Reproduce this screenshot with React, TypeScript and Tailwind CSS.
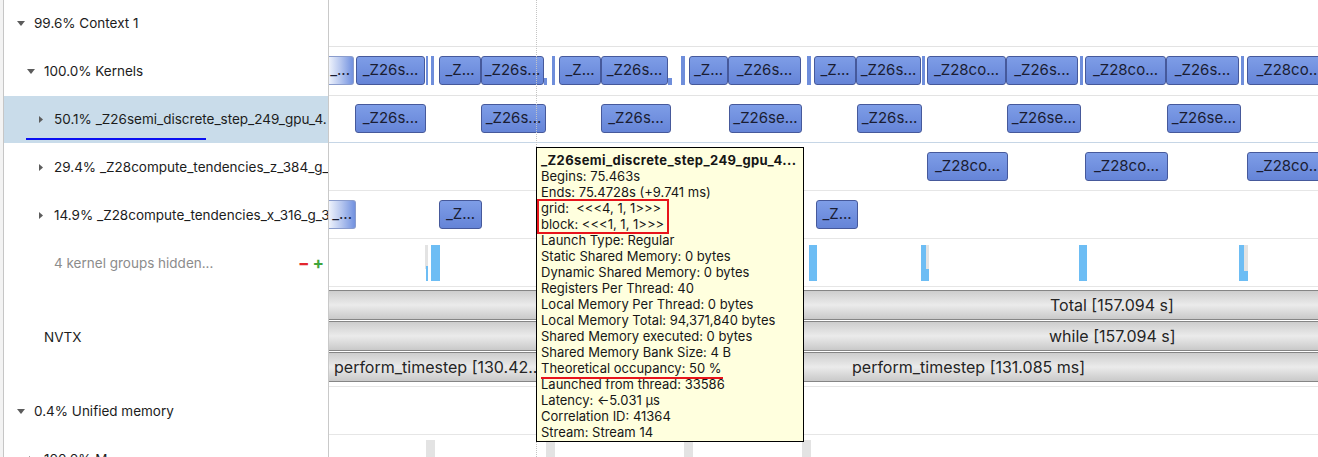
import React from "react";

type Box = { x: number; w: number; label?: string; fade?: boolean; sliver?: boolean; low?: boolean };

const kernelsRow: Box[] = [
  { x: 0, w: 25, label: "_...", fade: true },
  { x: 27, w: 69, label: "_Z26s..." },
  { x: 97, w: 2, sliver: true },
  { x: 102, w: 3, sliver: true },
  { x: 110, w: 42, label: "_Z..." },
  { x: 152, w: 63, label: "_Z26s..." },
  { x: 215, w: 3, sliver: true, low: true },
  { x: 223, w: 3, sliver: true },
  { x: 230, w: 42, label: "_Z..." },
  { x: 272, w: 67, label: "_Z26s..." },
  { x: 339, w: 4, sliver: true, low: true },
  { x: 352, w: 4, sliver: true },
  { x: 360, w: 39, label: "_Z..." },
  { x: 399, w: 73, label: "_Z26s..." },
  { x: 478, w: 4, sliver: true },
  { x: 485, w: 42, label: "_Z..." },
  { x: 527, w: 65, label: "_Z26s..." },
  { x: 593, w: 3, sliver: true },
  { x: 598, w: 79, label: "_Z28co..." },
  { x: 677, w: 72, label: "_Z26s..." },
  { x: 751, w: 3, sliver: true },
  { x: 756, w: 81, label: "_Z28co..." },
  { x: 837, w: 73, label: "_Z26s..." },
  { x: 912, w: 3, sliver: true },
  { x: 918, w: 84, label: "_Z28co..." },
];

const semiRow: Box[] = [
  { x: 26, w: 71, label: "_Z26s..." },
  { x: 152, w: 65, label: "_Z26s..." },
  { x: 272, w: 70, label: "_Z26s..." },
  { x: 400, w: 73, label: "_Z26se..." },
  { x: 528, w: 65, label: "_Z26s..." },
  { x: 678, w: 74, label: "_Z26se..." },
  { x: 838, w: 74, label: "_Z26se..." },
];

const zRow: Box[] = [
  { x: 598, w: 81, label: "_Z28co..." },
  { x: 756, w: 83, label: "_Z28co..." },
  { x: 918, w: 84, label: "_Z28co..." },
];

const xRow: Box[] = [
  { x: 0, w: 27, label: "_...", fade: true },
  { x: 110, w: 43, label: "_Z..." },
  { x: 487, w: 42, label: "_Z..." },
];

const memBars = [
  { x: 102, w: 9 },
  { x: 480, w: 8 },
  { x: 592, w: 8 },
  { x: 750, w: 8 },
  { x: 910, w: 9 },
];

const bottomBlocks = [97, 217, 355, 473];

const tooltipLines = [
  "Begins: 75.463s",
  "Ends: 75.4728s (+9.741 ms)",
  "grid:  <<<4, 1, 1>>>",
  "block: <<<1, 1, 1>>>",
  "Launch Type: Regular",
  "Static Shared Memory: 0 bytes",
  "Dynamic Shared Memory: 0 bytes",
  "Registers Per Thread: 40",
  "Local Memory Per Thread: 0 bytes",
  "Local Memory Total: 94,371,840 bytes",
  "Shared Memory executed: 0 bytes",
  "Shared Memory Bank Size: 4 B",
  "Theoretical occupancy: 50 %",
  "Launched from thread: 33586",
  "Latency: \u21905.031 \u00b5s",
  "Correlation ID: 41364",
  "Stream: Stream 14",
];

const DownTri = () => (
  <svg width="8" height="5" viewBox="0 0 8 5">
    <polygon points="0,0 8,0 4,5" fill="#5c5c5c" />
  </svg>
);

const RightTri = () => (
  <svg width="4" height="7" viewBox="0 0 4 7">
    <polygon points="0,0 4,3.5 0,7" fill="#5c5c5c" />
  </svg>
);

const pads = ["pl-[13px]", "pl-[23px]", "pl-[33px]"];

function TreeRow({
  level,
  icon,
  label,
  h,
  selected,
  muted,
  extra,
}: {
  level: number;
  icon?: "down" | "right";
  label: string;
  h: string;
  selected?: boolean;
  muted?: boolean;
  extra?: React.ReactNode;
}) {
  return (
    <div
      className={`flex shrink-0 items-center whitespace-nowrap overflow-hidden ${h} ${pads[level]} ${
        selected ? "bg-[#c9dcea]" : ""
      }`}
    >
      <span className="flex w-[8px] mr-[9px] shrink-0 items-center justify-center">
        {icon === "down" && <DownTri />}
        {icon === "right" && <RightTri />}
      </span>
      <span className={muted ? "text-[#8c8c8c]" : "text-[#1c1c1c]"}>{label}</span>
      {extra}
    </div>
  );
}

function Kernel({ b, top }: { b: Box; top: string }) {
  if (b.sliver) {
    return (
      <div
        className={`absolute bg-[#6f8edb] ${b.low ? "top-[31px] h-[7px]" : `${top} h-[29px]`}`}
        style={{ left: b.x, width: b.w }}
      />
    );
  }
  return (
    <div
      className={`absolute ${top} h-[29px] flex items-center overflow-hidden whitespace-nowrap text-[15px] text-[#1a1d33] ${
        b.fade
          ? "justify-end pr-[3px] bg-linear-to-r from-[#eef2fb] via-[#b3c4ee] to-[#7291df] rounded-r-[3px] border-y border-r border-[#8a9ccc]"
          : "justify-center bg-linear-to-b from-[#7e9de7] to-[#6584d7] rounded-[3px] border border-[#46599b]"
      }`}
      style={{ left: b.x, width: b.w }}
    >
      {b.label}
    </div>
  );
}

function NvtxBar({ children, className = "" }: { children?: React.ReactNode; className?: string }) {
  return (
    <div
      className={`h-[30px] shrink-0 flex items-center border-y border-[#858585] bg-linear-to-b from-[#cdcdcd] via-[#ebebeb] to-[#c9c9c9] text-[16px] text-[#252525] whitespace-nowrap overflow-hidden ${className}`}
    >
      {children}
    </div>
  );
}

export default function App() {
  return (
    <div className="h-[457px] w-[1318px] overflow-hidden bg-white flex font-['Inter','Liberation_Sans',sans-serif] text-[13.5px]">
      {/* splitter strip */}
      <div className="w-[4px] shrink-0 bg-[#f3f3f3] border-r border-[#c6c6c6]" />

      {/* tree panel */}
      <div className="relative w-[325px] shrink-0 border-r border-[#c9c9c9] flex flex-col">
        <TreeRow level={0} icon="down" label="99.6% Context 1" h="h-[47px]" />
        <TreeRow level={1} icon="down" label="100.0% Kernels" h="h-[49px]" />
        <TreeRow level={2} icon="right" label="50.1% _Z26semi_discrete_step_249_gpu_4." h="h-[47px]" selected />
        <TreeRow level={2} icon="right" label="29.4% _Z28compute_tendencies_z_384_g_" h="h-[48px]" />
        <TreeRow level={2} icon="right" label="14.9% _Z28compute_tendencies_x_316_g_3" h="h-[48px]" />
        <TreeRow
          level={2}
          label="4 kernel groups hidden..."
          h="h-[48px]"
          muted
          extra={
            <span className="ml-auto mr-[4px] flex items-center gap-[3px] text-[17px] font-bold leading-none">
              <span className="text-[#e3262d]">{"\u2212"}</span>
              <span className="text-[#3fa53c]">+</span>
            </span>
          }
        />
        <TreeRow level={1} label="NVTX" h="h-[100px]" />
        <TreeRow level={0} icon="down" label="0.4% Unified memory" h="h-[48px]" />
        <TreeRow level={1} icon="right" label="100.0% M" h="h-[48px]" />

        {/* annotation underline */}
        <div className="absolute left-[22px] top-[138px] w-[180px] h-[2px] bg-[#0a10f2]" />
      </div>

      {/* timeline */}
      <div className="relative flex-1 flex flex-col overflow-hidden">
        <div className="h-[47px] shrink-0 border-b border-[#e3e3e3]" />
        <div className="relative h-[49px] shrink-0 border-b border-[#e3e3e3]">
          {kernelsRow.map((b, i) => (
            <Kernel key={i} b={b} top="top-[9px]" />
          ))}
        </div>
        <div className="relative h-[47px] shrink-0 border-b border-[#c6d6e6]">
          {semiRow.map((b, i) => (
            <Kernel key={i} b={b} top="top-[8px]" />
          ))}
        </div>
        <div className="relative h-[48px] shrink-0 border-b border-[#e6e6e6]">
          {zRow.map((b, i) => (
            <Kernel key={i} b={b} top="top-[9px]" />
          ))}
        </div>
        <div className="relative h-[48px] shrink-0 border-b border-[#e6e6e6]">
          {xRow.map((b, i) => (
            <Kernel key={i} b={b} top="top-[9px]" />
          ))}
        </div>
        <div className="relative h-[48px] shrink-0 border-b border-[#e6e6e6]">
          <div className="absolute left-[96px] top-[6px] w-[3px] h-[24px] bg-[#e3e3e3]" />
          <div className="absolute left-[97px] top-[27px] w-[2px] h-[15px] bg-[#6dbdf4]" />
          {memBars.map((m, i) => (
            <div key={i} className="absolute top-[6px] h-[36px] bg-[#6dbdf4]" style={{ left: m.x, width: m.w }} />
          ))}
          <div className="absolute left-[597px] top-[6px] w-[3px] h-[24px] bg-[#e3e3e3]" />
          <div className="absolute left-[915px] top-[6px] w-[4px] h-[26px] bg-[#e3e3e3]" />
        </div>

        {/* NVTX */}
        <div className="h-[100px] shrink-0 border-b border-[#e6e6e6] pt-[3px] flex flex-col gap-[1px]">
          <NvtxBar className="pl-[721px]">Total [157.094 s]</NvtxBar>
          <NvtxBar className="pl-[720px]">while [157.094 s]</NvtxBar>
          <div className="flex gap-[3px]">
            <NvtxBar className="w-[215px] pl-[5px]">perform_timestep [130.42...</NvtxBar>
            <NvtxBar className="flex-1 pl-[305px]">perform_timestep [131.085 ms]</NvtxBar>
          </div>
        </div>

        <div className="h-[48px] shrink-0 border-b border-[#e6e6e6]" />
        <div className="relative h-[48px] shrink-0">
          {bottomBlocks.map((x, i) => (
            <div key={i} className="absolute top-[5px] w-[9px] h-[40px] bg-[#e3e3e3]" style={{ left: x }} />
          ))}
        </div>

        {/* cursor line */}
        <div className="absolute left-[207px] top-0 bottom-0 border-l border-dotted border-[#c4c4c4]" />

        {/* tooltip */}
        <div className="absolute left-[207px] top-[147px] w-[268px] h-[295px] border border-black bg-[#ffffde] pl-[4px] pt-[4px] text-[13px] leading-[16px] text-[#161616] whitespace-nowrap">
          <div className="font-bold tracking-[0.03em]">_Z26semi_discrete_step_249_gpu_4...</div>
          {tooltipLines.map((l, i) => (
            <div key={i} className="whitespace-pre">
              {l}
            </div>
          ))}
          <div className="absolute left-[0px] top-[51px] w-[132px] h-[35px] border-[2px] border-[#e8141c]" />
          <div className="absolute left-[4px] top-[229px] w-[182px] h-[2px] bg-[#e8141c]" />
        </div>
      </div>
    </div>
  );
}
